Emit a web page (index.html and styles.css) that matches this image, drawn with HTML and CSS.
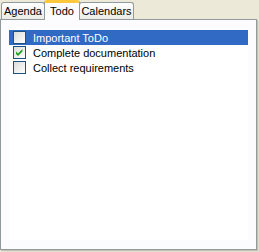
FILE: index.html
```html
<!DOCTYPE html>
<html lang="en">
<head>
  <meta charset="UTF-8">
  <title>Todo</title>
  <link rel="stylesheet" href="styles.css">
</head>
<body>
  <div class="tabs">
    <div class="tab tab-agenda">Agenda</div>
    <div class="tab tab-todo active">Todo</div>
    <div class="tab tab-calendars">Calendars</div>
  </div>
  <div class="panel">
    <div class="list">
      <div class="row selected">
        <span class="check"></span>
        <span class="label">Important ToDo</span>
      </div>
      <div class="row">
        <span class="check">
          <svg width="11" height="11" viewBox="0 0 11 11"><path d="M2 4.5 L4 6.5 L8.5 2 L8.5 4.5 L4 9 L2 7 Z" fill="#21a121"/></svg>
        </span>
        <span class="label">Complete documentation</span>
      </div>
      <div class="row">
        <span class="check"></span>
        <span class="label">Collect requirements</span>
      </div>
    </div>
  </div>
</body>
</html>
```

FILE: styles.css
```css
body {
  margin: 0;
  width: 259px;
  height: 252px;
  background-color: #ece9d8;
  font-family: 'Liberation Sans', Arial, sans-serif;
  font-size: 11px;
  color: #000;
}

/* tab strip */
.tabs {
  display: flex;
  align-items: flex-end;
  height: 19px;
  padding-left: 1px;
  position: relative;
  z-index: 1;
}
.tab {
  height: 17px;
  line-height: 17px;
  text-align: center;
  border: 1px solid #919b9c;
  border-bottom: none;
  border-radius: 3px 3px 0 0;
  background: linear-gradient(#ffffff, #ecebe6);
  margin-right: -1px;
  box-sizing: border-box;
  white-space: nowrap;
}
.tab-agenda { width: 44px; }
.tab-todo { width: 36px; }
.tab-calendars { width: 55px; }

.tab.active {
  height: 20px;
  line-height: 17px;
  border-top: 3px solid #ffc83c;
  background: #fcfcfe;
  margin-bottom: -1px;
  position: relative;
  z-index: 2;
}

/* panel */
.panel {
  width: 257px;
  height: 231px;
  box-sizing: border-box;
  border: 1px solid #919b9c;
  background-color: #fcfcfe;
  padding: 8px 8px 9px 8px;
  box-shadow: 1px 1px 0 #c4c1b3, 2px 2px 0 #e2ded0;
}
.list {
  height: 100%;
  background-color: #fff;
  padding-top: 2px;
  box-sizing: border-box;
}

.row {
  display: flex;
  align-items: center;
  height: 15px;
  padding-left: 4px;
  gap: 7px;
}
.row.selected {
  background-color: #316ac5;
  color: #fff;
}

.check {
  width: 13px;
  height: 13px;
  box-sizing: border-box;
  border: 1px solid #1c5180;
  background: linear-gradient(135deg, #dcdcd7, #ffffff);
  display: flex;
  align-items: center;
  justify-content: center;
}
```
